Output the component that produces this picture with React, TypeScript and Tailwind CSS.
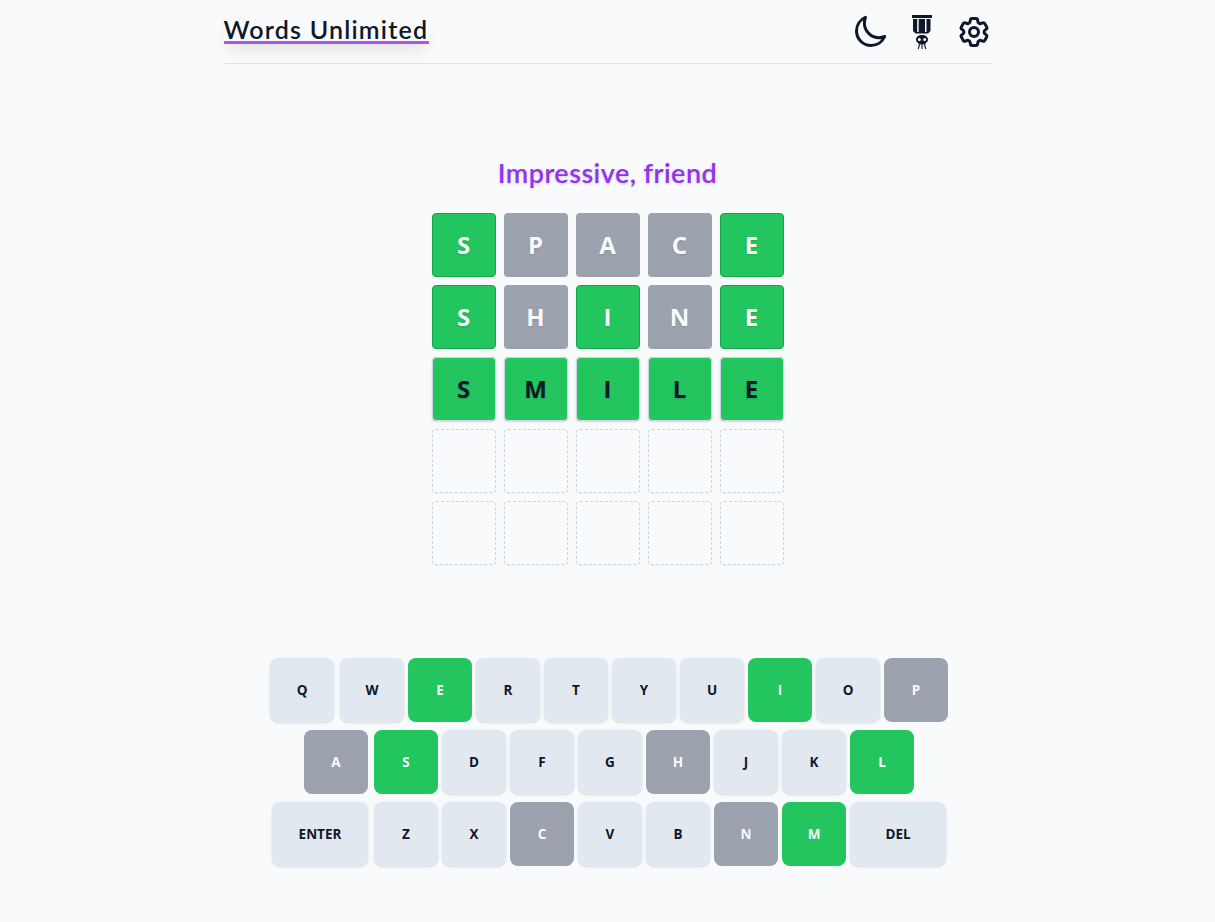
import React from "react";
import { HiOutlineMoon, HiOutlineCog6Tooth } from "react-icons/hi2";

const GREEN = "bg-[#22c55e]";
const GRAY = "bg-[#9ca3af]";

const board: [string, string][][] = [
  [["S", "g"], ["P", "x"], ["A", "x"], ["C", "x"], ["E", "g"]],
  [["S", "g"], ["H", "x"], ["I", "g"], ["N", "x"], ["E", "g"]],
  [["S", "w"], ["M", "w"], ["I", "w"], ["L", "w"], ["E", "w"]],
  [["", "e"], ["", "e"], ["", "e"], ["", "e"], ["", "e"]],
  [["", "e"], ["", "e"], ["", "e"], ["", "e"], ["", "e"]],
];

const tileClass: Record<string, string> = {
  g: "bg-[#22c55e] border border-[#16a34a] text-[#f8fafc] [text-shadow:0_1px_2px_rgba(0,0,0,0.12)]",
  x: "bg-[#9ca3af] text-[#f8fafc] [text-shadow:0_1px_2px_rgba(0,0,0,0.12)]",
  w: "bg-[#22c55e] border border-[#cbd5e1] text-[#0f172a] shadow-sm [text-shadow:0_1px_2px_rgba(0,0,0,0.12)]",
  e: "border border-dashed border-[#cbd5e1] shadow-[0_1px_2px_rgba(0,0,0,0.03)]",
};

const keyRows: string[][] = [
  ["Q", "W", "E", "R", "T", "Y", "U", "I", "O", "P"],
  ["A", "S", "D", "F", "G", "H", "J", "K", "L"],
  ["ENTER", "Z", "X", "C", "V", "B", "N", "M", "DEL"],
];
const greenKeys = "ESILM";
const grayKeys = "PACHN";

function keyStyle(k: string) {
  if (k.length === 1 && greenKeys.includes(k)) return `${GREEN} text-[#f8fafc]`;
  if (k.length === 1 && grayKeys.includes(k)) return `${GRAY} text-[#f8fafc]`;
  return "bg-[#e2e8f0] text-[#0f172a] shadow-sm";
}

function SkullBanner() {
  return (
    <svg width="36" height="36" viewBox="0 0 36 36" fill="#0f172a" aria-hidden="true">
      <rect x="8" y="1" width="20" height="3" rx="0.5" />
      <path d="M9 5h17.500v12l-2.500 2.500h-12.500l-2.500-2.500z" />
      <rect x="13.200" y="5" width="1.500" height="13" fill="#f9fafc" />
      <rect x="21" y="5" width="1.500" height="13" fill="#f9fafc" />
      <path d="M18 21c3.600 0 6 1.900 6 4.500 0 1.800-1 3-2.500 3.700v1.300h-7v-1.300c-1.500-.7-2.500-1.900-2.500-3.700 0-2.600 2.400-4.500 6-4.500z" />
      <circle cx="15.300" cy="25.500" r="1.500" fill="#f9fafc" />
      <circle cx="20.700" cy="25.500" r="1.500" fill="#f9fafc" />
      <path d="M15.500 30.500l-1.300 4.500M18 30.500v4.500M20.500 30.500l1.300 4.500" stroke="#0f172a" strokeWidth="1.100" fill="none" />
    </svg>
  );
}

export default function App() {
  return (
    <div className="min-h-[922px] bg-[#f9fafc] font-['Open_Sans','Noto_Sans',sans-serif] text-[#0f172a]">
      <header className="mx-auto flex h-16 w-[768px] justify-between border-b border-[#e5e0ee]">
        <div className="mt-[15px] h-[29px] w-[205px] shadow-[0_10px_15px_-3px_rgba(0,0,0,0.08)]">
          <h1 className="h-[29px] whitespace-nowrap border-b-[3px] border-[#a855f7] pt-px font-['Lato',sans-serif] text-[25px] font-semibold leading-[26px] tracking-[1.2px] text-[#0f172a]">
            Words Unlimited
          </h1>
        </div>
        <div className="mt-[14px] flex h-9 items-center gap-4">
          <HiOutlineMoon size={36} style={{ strokeWidth: 2 }} className="stroke-[#0f172a]" />
          <SkullBanner />
          <HiOutlineCog6Tooth size={36} style={{ strokeWidth: 2 }} className="stroke-[#0f172a]" />
        </div>
      </header>

      <main className="flex flex-col items-center">
        <p className="mt-[92px] h-[57px] font-['Lato',sans-serif] text-[27px] font-semibold leading-[34px] tracking-[0.45px] text-[#9333ea] [text-shadow:0_1px_3px_rgba(0,0,0,0.2)]">
          Impressive, friend
        </p>
        <div className="flex flex-col gap-2">
          {board.map((row, r) => (
            <div key={r} className="flex gap-2">
              {row.map(([l, s], c) => (
                <div
                  key={c}
                  className={`flex h-16 w-16 items-center justify-center rounded text-2xl font-bold ${tileClass[s]}`}
                >
                  {l}
                </div>
              ))}
            </div>
          ))}
        </div>
        <div className="mt-[93px] flex flex-col gap-2">
          {keyRows.map((row, r) => (
            <div key={r} className="flex justify-center gap-1">
              {row.map((k, i) => (
                <div
                  key={k}
                  className={`flex h-16 items-center justify-center rounded-lg text-[13.5px] font-bold ${
                    k.length > 1 ? "w-24" : "w-16"
                  } ${i === 0 ? "ml-[3px] mr-[2px]" : ""} ${keyStyle(k)}`}
                >
                  {k}
                </div>
              ))}
            </div>
          ))}
        </div>
      </main>
    </div>
  );
}
